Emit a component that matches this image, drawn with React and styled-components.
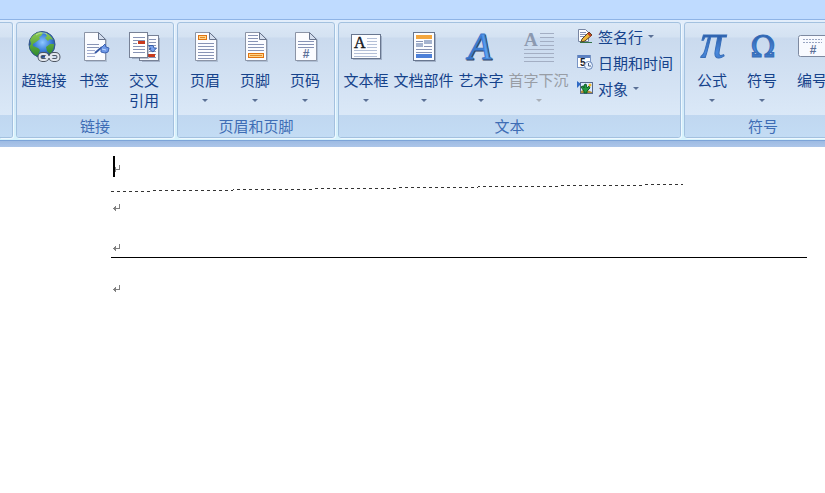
import React from 'react';
import styled, { createGlobalStyle } from 'styled-components';

const GlobalStyle = createGlobalStyle`
  body {
    margin: 0;
    background: #fff;
    font-family: "Liberation Sans", "Noto Sans CJK SC", sans-serif;
  }
`;

// Styled Components
const Page = styled.div`
  overflow: hidden;
`;

const TabStrip = styled.div`
  height: 19px;
  background: #bfdbff;
  border-bottom: 1px solid #8fb4e6;
`;

const Ribbon = styled.div`
  display: flex;
  gap: 3px;
  padding: 2px 0;
  overflow: hidden;
  background: linear-gradient(#e3eefb, #d3e6f8 50%, #d6f3fc);
  border-bottom: 1px solid #7da4d8;
`;

const RibbonEdge = styled.div`
  height: 6px;
  background: linear-gradient(#9dbbe3, #adc6e9);
`;

const Group = styled.section`
  flex: none;
  display: flex;
  flex-direction: column;
  border: 1px solid #a3c1df;
  border-radius: 3px;
  overflow: hidden;
  background: linear-gradient(#dce8f6, #d4e2f2 14px, #cadaee 15px, #dfecfa);
  box-shadow: 1px 1px 0 #eef8ff;
`;

const PartialGroup = styled(Group)`
  width: 12px;
  border-left: none;
  border-radius: 0 3px 3px 0;
`;

const GroupBody = styled.div`
  display: flex;
  height: 92px;
  padding: 0 4px 0 2px;
`;

const GroupTitle = styled.div`
  height: 22px;
  line-height: 23px;
  text-align: center;
  font-size: 15px;
  color: #3e6db5;
  background: linear-gradient(#c0d7f0, #c3dcf4);
`;

const LargeButton = styled.button`
  display: flex;
  flex-direction: column;
  align-items: center;
  width: ${(props) => (props.$wide ? '65px' : '50px')};
  padding: 7px 0 0;
  border: none;
  background: none;
  font: inherit;
  font-size: 15px;
  line-height: 20px;
  white-space: nowrap;
  color: ${(props) => (props.disabled ? '#989da5' : '#15428b')};
`;

const ButtonLabel = styled.span`
  margin-top: 9px;
`;

const Arrow = styled.span`
  width: 0;
  border: 3px solid transparent;
  border-top-color: ${(props) => (props.$muted ? '#a9afb8' : '#5a7096')};
  border-bottom: none;
`;

const LargeArrow = styled(Arrow)`
  margin-top: 8px;
`;

const SmallColumn = styled.div`
  display: flex;
  flex-direction: column;
  align-items: flex-start;
  padding-left: 3px;
`;

const SmallButton = styled.button`
  display: flex;
  align-items: center;
  gap: 5px;
  height: 26px;
  padding: 0 3px;
  border: none;
  background: none;
  font: inherit;
  font-size: 15px;
  white-space: nowrap;
  color: #15428b;
`;

const IconSvg = styled.svg`
  flex: none;
  overflow: visible;
`;

const Document = styled.main`
  position: relative;
  display: flex;
  flex-direction: column;
  gap: 18px;
  padding: 9px 18px 40px 111px;
  background: #fff;
`;

const Paragraph = styled.div`
  position: relative;
  display: flex;
  align-items: flex-end;
  height: 21px;
  padding: 0 2px;

  svg {
    margin-bottom: 5px;
  }
`;

const RuledParagraph = styled(Paragraph)`
  height: 22px;
  padding-bottom: 1px;
  border-bottom: 1px solid #000;
`;

const Caret = styled.span`
  position: absolute;
  left: 2px;
  top: 0;
  width: 2px;
  height: 21px;
  background: #000;
`;

const DashedLine = styled.svg`
  position: absolute;
  left: 111px;
  top: 36px;
`;

// Icons
function Icon({ size = 32, children }) {
    return (
        <IconSvg width={size} height={size} viewBox={`0 0 ${size} ${size}`} aria-hidden="true">
            {children}
        </IconSvg>
    );
}

function Lines({ x, y, width, count, step = 3, color = '#8793b5' }) {
    return Array.from({ length: count }, (_, i) => (
        <rect key={i} x={x} y={y + i * step} width={width} height="1" fill={color} />
    ));
}

function Sheet() {
    return (
        <>
            <path d="M8 4H23L29 10V32H8Z" fill="#6b7a96" opacity=".3" />
            <path d="M6.500 2.500H20.500L27.500 9.500V30.500H6.500Z" fill="#fbfcff" stroke="#8b94a6" />
            <path d="M20.500 2.500V9.500H27.500Z" fill="#d5dfef" stroke="#68748c" />
        </>
    );
}

function GlobeIcon() {
    return (
        <Icon>
            <defs>
                <radialGradient id="sea" cx=".52" cy=".42" r=".6">
                    <stop offset="0" stopColor="#8fc8ff" />
                    <stop offset=".5" stopColor="#3f83dc" />
                    <stop offset="1" stopColor="#173c8d" />
                </radialGradient>
                <linearGradient id="land" x1="0" y1="0" x2="0" y2="1">
                    <stop offset="0" stopColor="#8ecb52" />
                    <stop offset="1" stopColor="#2f8a2d" />
                </linearGradient>
            </defs>
            <circle cx="14" cy="14.500" r="13" fill="url(#sea)" stroke="#345689" />
            <path d="M2 10C4 5 9 2 13 2L15 3 13 6 11 7 12 9 8 12 5 14 5 16 10 18 12 20 11 23 9 26C5 24 2 20 1.500 16L3 14Z" fill="url(#land)" />
            <path d="M17 3C21 4 24 7 25 10L22 9 20 11 17 8 19 6ZM18 17L22 14 26 14C26 18 25 21 22 24L19 21Z" fill="url(#land)" />
            <path d="M8 5C11 3 15 2 19 4" fill="none" stroke="#d9f3bd" opacity=".6" />
            <g fill="none" stroke="#4e5663" strokeWidth="4">
                <rect x="11.500" y="24" width="8" height="6" rx="3" />
                <rect x="22.500" y="24" width="8" height="6" rx="3" />
                <path d="M17 27H25" />
            </g>
            <g fill="none" stroke="#e3e7ee" strokeWidth="2">
                <rect x="11.500" y="24" width="8" height="6" rx="3" />
                <rect x="22.500" y="24" width="8" height="6" rx="3" />
                <path d="M17 27H25" />
            </g>
        </Icon>
    );
}

function BookmarkIcon() {
    return (
        <Icon>
            <Sheet />
            <Lines x={9} y={14} width={12} count={2} />
            <Lines x={9} y={20} width={8} count={3} color="#a3add0" />
            <path d="M17 23L24 17" stroke="#3658a5" strokeWidth="2" />
            <path d="M23 18L27 14 28 17 31 18 30 22 27 23 23 22Z" fill="#6e98e6" stroke="#3c62b3" />
            <path d="M24 19L28 20" stroke="#c0d8ff" />
        </Icon>
    );
}

function CrossReferenceIcon() {
    return (
        <Icon>
            <path d="M14 8H32V32H14Z" fill="#53627d" opacity=".35" />
            <rect x="11.500" y="5.500" width="19" height="25" fill="#fbfcff" stroke="#778196" />
            <Lines x={21} y={9} width={7} count={7} />
            <rect x="20" y="24" width="7" height="3" fill="#c8391c" />
            <path d="M4 5H21V29H4Z" fill="#53627d" opacity=".35" />
            <rect x="1.500" y="2.500" width="18" height="25" fill="#fff" stroke="#778196" />
            <Lines x={5} y={7} width={12} count={2} />
            <rect x="5" y="13" width="4" height="1" fill="#8793b5" />
            <rect x="10" y="11" width="7" height="3" fill="#c8391c" />
            <Lines x={5} y={16} width={12} count={3} />
            <path d="M20.500 15.500H25L26 18H28.500L25 22 21 19H23L22 17.500Z" fill="#7aa2ee" stroke="#365ca9" />
        </Icon>
    );
}

function HeaderIcon() {
    return (
        <Icon>
            <Sheet />
            <rect x="9.500" y="5.500" width="8" height="4" fill="#ffd48a" stroke="#df7412" />
            <rect x="11" y="7" width="5" height="1" fill="#e48a28" />
            <Lines x={9} y={13} width={16} count={6} />
        </Icon>
    );
}

function FooterIcon() {
    return (
        <Icon>
            <Sheet />
            <Lines x={9} y={5} width={10} count={3} />
            <Lines x={9} y={14} width={16} count={3} />
            <rect x="9.500" y="23.500" width="15" height="4" fill="#ffd48a" stroke="#df7412" />
            <rect x="11" y="25" width="12" height="1" fill="#e48a28" />
        </Icon>
    );
}

function PageNumberIcon() {
    return (
        <Icon>
            <Sheet />
            <Lines x={9} y={11} width={16} count={3} />
            <text x="17" y="28" textAnchor="middle" fontSize="12" fontWeight="bold" fill="#5d7199">#</text>
        </Icon>
    );
}

function TextBoxIcon() {
    return (
        <Icon>
            <path d="M3 6H32V30H3Z" fill="#53627d" opacity=".35" />
            <rect x="1.500" y="4.500" width="29" height="24" fill="#fcfdff" stroke="#68768f" />
            <text x="4" y="18" fontFamily="Liberation Serif, serif" fontSize="16" fill="#15181f" stroke="#15181f" strokeWidth=".4">A</text>
            <Lines x={17} y={8} width={10} count={4} color="#b3bfd7" />
            <Lines x={4} y={20} width={23} count={3} color="#b3bfd7" />
        </Icon>
    );
}

function QuickPartsIcon() {
    return (
        <Icon>
            <path d="M7 4H28V32H7Z" fill="#53627d" opacity=".35" />
            <rect x="5.500" y="2.500" width="21" height="28" fill="#fcfdff" stroke="#68768f" />
            <rect x="8" y="5" width="16" height="4" fill="#f3a63e" />
            <Lines x={8} y={11} width={7} count={1} />
            <rect x="8" y="13" width="7" height="4" fill="#a6b4cf" />
            <rect x="16" y="10" width="8" height="4" fill="#a6b4cf" />
            <Lines x={16} y={16} width={8} count={1} />
            <Lines x={8} y={19} width={16} count={2} />
            <rect x="8" y="24" width="16" height="4" fill="#4d80d8" />
        </Icon>
    );
}

function WordArtIcon() {
    return (
        <Icon>
            <defs>
                <linearGradient id="art" x1="0" y1="0" x2="1" y2="0">
                    <stop offset="0" stopColor="#2c63b8" />
                    <stop offset=".6" stopColor="#4a8fe6" />
                    <stop offset="1" stopColor="#6db4fb" />
                </linearGradient>
            </defs>
            <g fontFamily="Liberation Serif, serif" fontSize="38" fontStyle="italic">
                <text x="4" y="30" fill="#334463" stroke="#334463">A</text>
                <text x="3" y="29" fill="url(#art)" stroke="#3a78cc">A</text>
            </g>
        </Icon>
    );
}

function DropCapIcon() {
    return (
        <Icon>
            <text x="1" y="16" fontFamily="Liberation Serif, serif" fontSize="19" fontWeight="bold" fill="#8c99b0">A</text>
            <Lines x={17} y={3} width={14} count={4} step={4} color="#a3aec3" />
            <Lines x={1} y={19} width={30} count={4} step={4} color="#a3aec3" />
        </Icon>
    );
}

function EquationIcon() {
    return (
        <Icon>
            <defs>
                <linearGradient id="equation" x1="0" y1="0" x2="0" y2="1">
                    <stop offset=".4" stopColor="#2c5da8" />
                    <stop offset=".7" stopColor="#4b8ade" />
                    <stop offset="1" stopColor="#2b63b1" />
                </linearGradient>
            </defs>
            <text x="17" y="28" textAnchor="middle" fontFamily="Liberation Serif, serif" fontSize="50" fontStyle="italic" fill="url(#equation)" stroke="#376eb9">π</text>
        </Icon>
    );
}

function OmegaIcon() {
    return (
        <Icon>
            <defs>
                <linearGradient id="omega" x1="0" y1="0" x2="0" y2="1">
                    <stop offset=".2" stopColor="#2c5da8" />
                    <stop offset=".6" stopColor="#4b8ade" />
                    <stop offset="1" stopColor="#2b63b1" />
                </linearGradient>
            </defs>
            <text x="17" y="27" textAnchor="middle" fontFamily="DejaVu Serif, serif" fontSize="30" fill="url(#omega)" stroke="#376eb9" strokeWidth="1.200">Ω</text>
        </Icon>
    );
}

function NumberIcon() {
    return (
        <Icon>
            <rect x="2.500" y="5.500" width="29" height="21" rx="2" fill="#f8faff" stroke="#7d89a0" />
            <path d="M7 9.500H26M7 12.500H26" stroke="#9aa6c2" strokeDasharray="2 1" />
            <text x="17" y="24" textAnchor="middle" fontSize="12" fontWeight="bold" fill="#5d7199">#</text>
        </Icon>
    );
}

function SignatureIcon() {
    return (
        <Icon size={16}>
            <path d="M1.500 1.500H8.500L11.500 4.500V13.500H1.500Z" fill="#fff" stroke="#7886a3" />
            <Lines x={3} y={4} width={6} count={3} step={2} />
            <path d="M5 11L12 4 15 7 8 13 4 14Z" fill="#eeb63b" stroke="#564322" />
            <path d="M11 5L14 8" stroke="#bd3c22" strokeWidth="2" />
            <path d="M3 14.500H15" stroke="#337347" />
        </Icon>
    );
}

function DateTimeIcon() {
    return (
        <Icon size={16}>
            <rect x="0.500" y="1.500" width="13" height="12" fill="#fff" stroke="#7995c5" />
            <rect x="1" y="1" width="12" height="3" fill="#5b80c1" />
            <text x="3" y="12" fontSize="10" fontWeight="bold" fill="#161c2d">5</text>
            <circle cx="11.500" cy="11.500" r="4" fill="#e9f3ff" stroke="#6785b7" />
            <path d="M11.500 9V12H14" fill="none" stroke="#4e6084" />
        </Icon>
    );
}

function ObjectIcon() {
    return (
        <Icon size={16}>
            <rect x="3.500" y="2.500" width="12" height="11" fill="#dceaff" stroke="#566a8c" />
            <path d="M0 1L4 4 0 8Z" fill="#316bc5" />
            <path d="M4 13V11L8 9 15 12V13Z" fill="#b28b3b" />
            <path d="M4 7L6 6 7 8V5L9 4 10 8 12 6 13 8 10 11V13H7V11Z" fill="#22983f" stroke="#0f5e26" />
            <circle cx="13" cy="5" r="1.500" fill="#f4b822" />
        </Icon>
    );
}

function ReturnMark() {
    return (
        <svg width="7" height="7" viewBox="0 0 7 7" shapeRendering="crispEdges" aria-hidden="true">
            <path d="M6 0H7V5H3V7H2V6H1V5H0V4H1V3H2V2H3V4H6Z" fill="#808080" />
        </svg>
    );
}

const groups = [
    {
        title: '链接',
        buttons: [
            { label: '超链接', icon: GlobeIcon },
            { label: '书签', icon: BookmarkIcon },
            { label: <>交叉<br />引用</>, icon: CrossReferenceIcon },
        ],
    },
    {
        title: '页眉和页脚',
        buttons: [
            { label: '页眉', icon: HeaderIcon, menu: true },
            { label: '页脚', icon: FooterIcon, menu: true },
            { label: '页码', icon: PageNumberIcon, menu: true },
        ],
    },
    {
        title: '文本',
        buttons: [
            { label: '文本框', icon: TextBoxIcon, menu: true },
            { label: '文档部件', icon: QuickPartsIcon, menu: true, wide: true },
            { label: '艺术字', icon: WordArtIcon, menu: true },
            { label: '首字下沉', icon: DropCapIcon, menu: true, wide: true, disabled: true },
        ],
        small: [
            { label: '签名行', icon: SignatureIcon, menu: true },
            { label: '日期和时间', icon: DateTimeIcon },
            { label: '对象', icon: ObjectIcon, menu: true },
        ],
    },
    {
        title: '符号',
        buttons: [
            { label: '公式', icon: EquationIcon, menu: true },
            { label: '符号', icon: OmegaIcon, menu: true },
            { label: '编号', icon: NumberIcon },
        ],
    },
];

function RibbonGroup({ title, buttons, small }) {
    return (
        <Group>
            <GroupBody>
                {buttons.map(({ label, icon: ButtonIcon, menu, wide, disabled }, index) => (
                    <LargeButton key={index} type="button" $wide={wide} disabled={disabled}>
                        <ButtonIcon />
                        <ButtonLabel>{label}</ButtonLabel>
                        {menu && <LargeArrow $muted={disabled} />}
                    </LargeButton>
                ))}
                {small && (
                    <SmallColumn>
                        {small.map(({ label, icon: ButtonIcon, menu }) => (
                            <SmallButton key={label} type="button">
                                <ButtonIcon />
                                {label}
                                {menu && <Arrow />}
                            </SmallButton>
                        ))}
                    </SmallColumn>
                )}
            </GroupBody>
            <GroupTitle>{title}</GroupTitle>
        </Group>
    );
}

function App() {
    return (
        <Page>
            <GlobalStyle />
            <TabStrip />
            <Ribbon>
                <PartialGroup as="div">
                    <GroupBody />
                    <GroupTitle />
                </PartialGroup>
                {groups.map((group) => (
                    <RibbonGroup key={group.title} {...group} />
                ))}
            </Ribbon>
            <RibbonEdge />
            <Document>
                <Paragraph>
                    <ReturnMark />
                    <Caret />
                </Paragraph>
                <DashedLine width="572" height="10" shapeRendering="crispEdges" aria-hidden="true">
                    <path d="M0 8.500L572 1.500" stroke="#333" strokeDasharray="3 3" />
                </DashedLine>
                <Paragraph>
                    <ReturnMark />
                </Paragraph>
                <RuledParagraph>
                    <ReturnMark />
                </RuledParagraph>
                <Paragraph>
                    <ReturnMark />
                </Paragraph>
            </Document>
        </Page>
    );
}

export default App;
